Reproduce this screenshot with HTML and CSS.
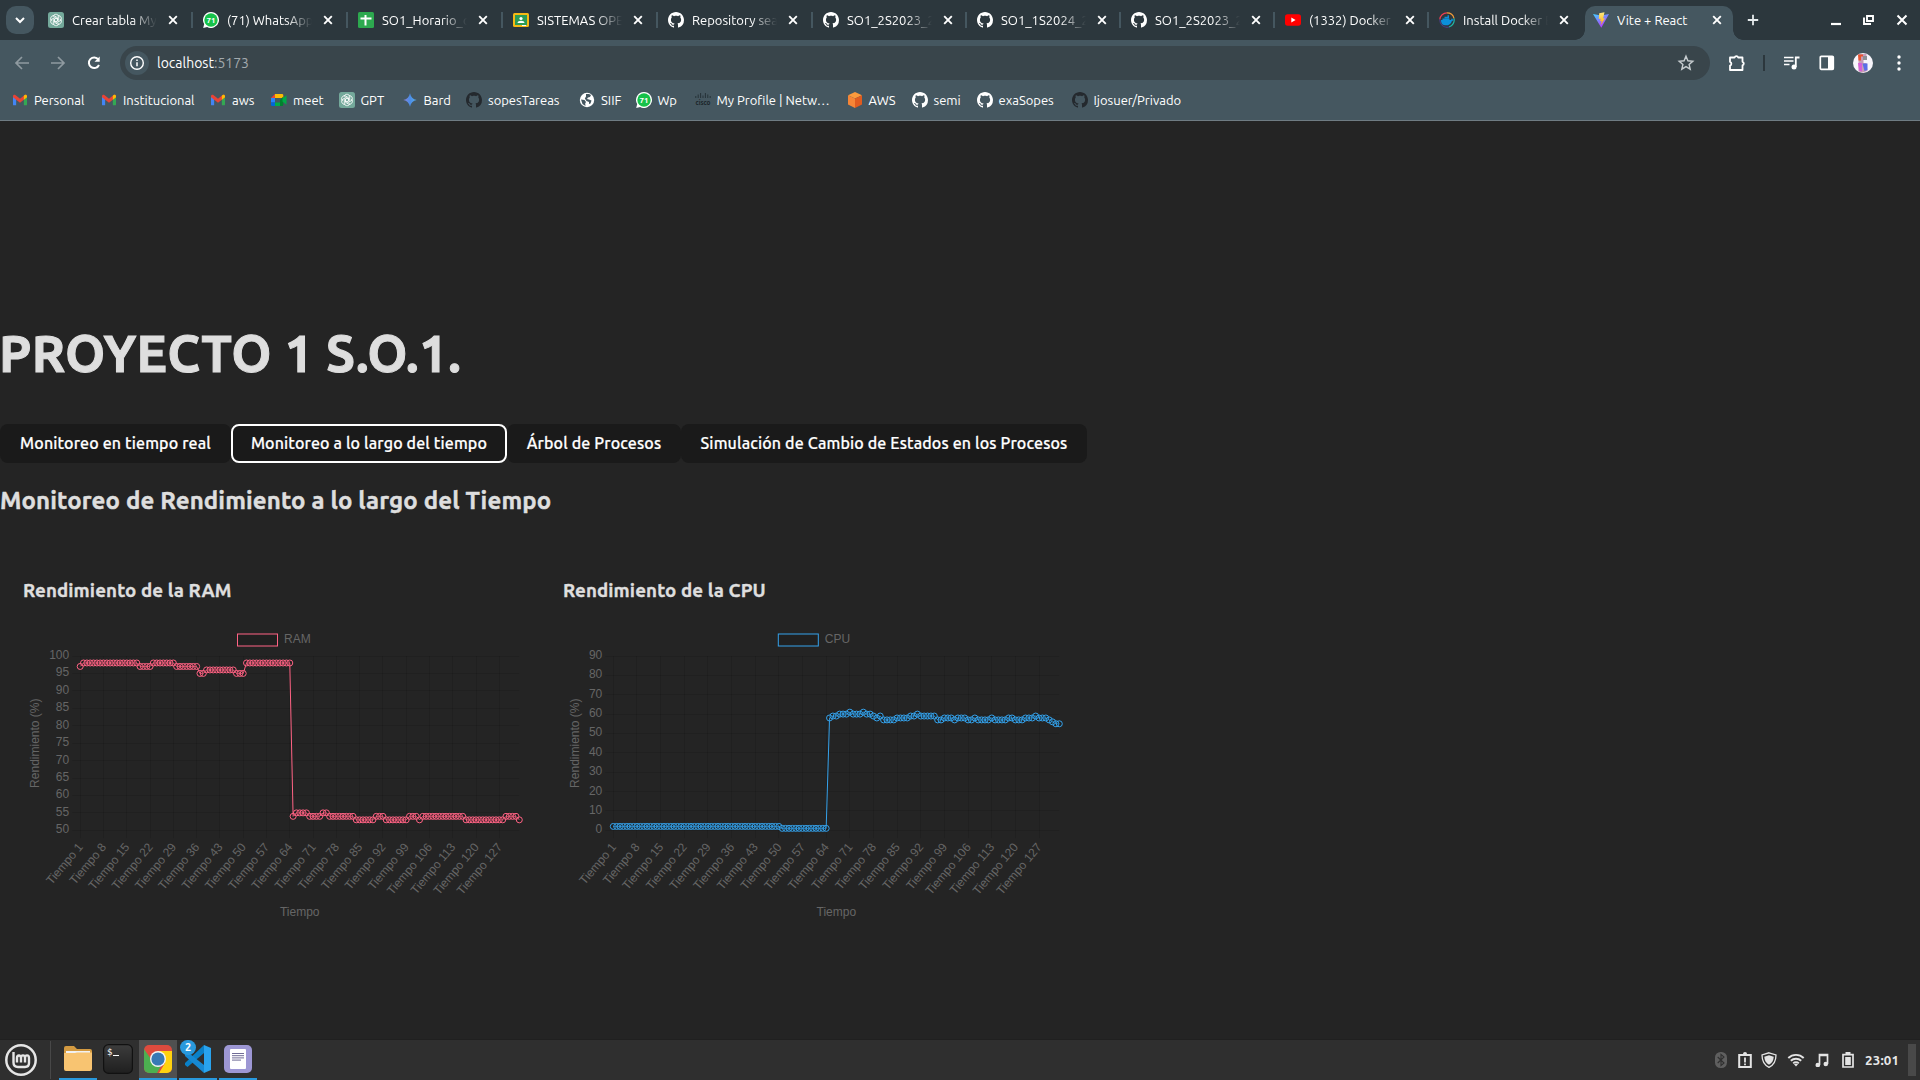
FILE: index.html
```html
<!DOCTYPE html>
<html lang="es">
<head>
<meta charset="utf-8">
<title>Vite + React</title>
<link rel="stylesheet" href="styles.css">
</head>
<body>
<svg class="defs" width="0" height="0" aria-hidden="true">
  <symbol id="github" viewBox="0 0 16 16"><path d="M8 0C3.58 0 0 3.58 0 8c0 3.54 2.29 6.53 5.47 7.59.4.07.55-.17.55-.38 0-.19-.01-.82-.01-1.49-2.01.37-2.53-.49-2.69-.94-.09-.23-.48-.94-.82-1.13-.28-.15-.68-.52-.01-.53.63-.01 1.08.58 1.23.82.72 1.21 1.87.87 2.33.66.07-.52.28-.87.51-1.07-1.78-.2-3.64-.89-3.64-3.95 0-.87.31-1.59.82-2.15-.08-.2-.36-1.02.08-2.12 0 0 .67-.21 2.2.82.64-.18 1.32-.27 2-.27s1.36.09 2 .27c1.53-1.04 2.2-.82 2.2-.82.44 1.1.16 1.92.08 2.12.51.56.82 1.27.82 2.15 0 3.07-1.87 3.75-3.65 3.95.29.25.54.73.54 1.48 0 1.07-.01 1.93-.01 2.2 0 .21.15.46.55.38A8.01 8.01 0 0 0 16 8c0-4.42-3.58-8-8-8z"/></symbol>
  <symbol id="gpt" viewBox="0 0 16 16"><rect width="16" height="16" rx="2.5" fill="#74a99b"/><g fill="none" stroke="#fff" stroke-width=".85"><path id="petal" d="M5.300 4.600c0-2.800 4.500-3.100 5.400-.4v4L8 9.700"/><use href="#petal" transform="rotate(60 8 8)"/><use href="#petal" transform="rotate(120 8 8)"/><use href="#petal" transform="rotate(180 8 8)"/><use href="#petal" transform="rotate(240 8 8)"/><use href="#petal" transform="rotate(300 8 8)"/></g></symbol>
  <symbol id="whatsapp" viewBox="0 0 16 16"><path d="M8 0a8 8 0 1 1-3.800 15.050L.2 16l1-3.900A8 8 0 0 1 8 0z" fill="#fff"/><circle cx="8" cy="8" r="6.700" fill="#16c24a"/><text x="8" y="11" text-anchor="middle" fill="#fff" font-size="8" font-weight="700">71</text></symbol>
  <symbol id="gmail" viewBox="0 0 16 12"><path d="M0 1.500V11a1 1 0 0 0 1 1h2.600V5z" fill="#4285f4"/><path d="M16 1.500V11a1 1 0 0 1-1 1h-2.600V5z" fill="#34a853"/><path d="M0 1.600C0 .2 1.600-.5 2.700.4L8 4.500 13.300.4C14.400-.5 16 .2 16 1.600V2.900L8 9 0 2.900z" fill="#ea4335"/><path d="M12.400 1v4.700L16 2.900V1.600C16 .2 14.400-.5 13.300.4z" fill="#fbbc04"/></symbol>
  <symbol id="close" viewBox="0 0 10 10"><path d="M1.200 1.200l7.600 7.600M8.800 1.200L1.200 8.800" stroke="currentColor" stroke-width="1.900"/></symbol>
</svg>

<header class="browser">
  <div class="tabstrip">
    <button class="tabsearch" aria-label="Buscar pestañas"><svg width="10" height="7" viewBox="0 0 10 7"><path d="M1 1l4 4 4-4" fill="none" stroke="#fff" stroke-width="2"/></svg></button>
    <div class="tabs">
      <div class="tab wide"><svg class="ico"><use href="#gpt"/></svg><span class="label">Crear tabla MySQL</span><svg class="x"><use href="#close"/></svg></div>
      <div class="tab wide"><svg class="ico"><use href="#whatsapp"/></svg><span class="label">(71) WhatsApp</span><svg class="x"><use href="#close"/></svg></div>
      <div class="tab wide"><svg class="ico" viewBox="0 0 16 16"><rect width="16" height="16" rx="1.500" fill="#2da94f"/><path d="M7.500 3v10.500M2.500 6.500h11" stroke="#fff" stroke-width="2"/></svg><span class="label">SO1_Horario_clases</span><svg class="x"><use href="#close"/></svg></div>
      <div class="tab wide"><svg class="ico" viewBox="0 0 16 16"><rect y="1" width="16" height="14" rx="1.500" fill="#f6b914"/><rect x="2" y="3" width="12" height="10" fill="#2c9b55"/><circle cx="8" cy="6.500" r="1.600" fill="#fff"/><path d="M4.500 11c0-3 7-3 7 0z" fill="#fff"/><path d="M9 13h4v1H9z" fill="#fff"/></svg><span class="label">SISTEMAS OPERATIVOS</span><svg class="x"><use href="#close"/></svg></div>
      <div class="tab wide"><svg class="ico white"><use href="#github"/></svg><span class="label">Repository search</span><svg class="x"><use href="#close"/></svg></div>
      <div class="tab"><svg class="ico white"><use href="#github"/></svg><span class="label">SO1_2S2023_201</span><svg class="x"><use href="#close"/></svg></div>
      <div class="tab"><svg class="ico white"><use href="#github"/></svg><span class="label">SO1_1S2024_201</span><svg class="x"><use href="#close"/></svg></div>
      <div class="tab"><svg class="ico white"><use href="#github"/></svg><span class="label">SO1_2S2023_201</span><svg class="x"><use href="#close"/></svg></div>
      <div class="tab"><svg class="ico" viewBox="0 0 16 16"><rect y="2.300" width="16" height="11.400" rx="2.600" fill="#f00"/><path d="M6.300 5.500v5L10.600 8z" fill="#fff"/></svg><span class="label">(1332) Docker Tutorial</span><svg class="x"><use href="#close"/></svg></div>
      <div class="tab last"><svg class="ico" viewBox="0 0 16 16"><g fill="none" stroke-width="1.200"><path d="M.8 7.500A7.200 7.200 0 0 1 8 .8" stroke="#ef3e50"/><path d="M8 .8a7.200 7.200 0 0 1 7 5.500" stroke="#f49c38"/><path d="M15 6.300A7.300 7.300 0 0 1 10 15" stroke="#20b9a8"/><path d="M10 15A7.300 7.300 0 0 1 .8 7.500" stroke="#493c82"/></g><path d="M2 8h10c.3-1 .6-1.600 1.200-1.600l.5 1 1 .3c-.3.900-1 1.100-1.800 1.200C12 12 10 13.300 7 13.300 4 13.300 2 12 2 8z" fill="#0b8fda"/><path d="M3.500 7.300h7M5.500 5.500h4.500M8.500 3.900H10" stroke="#0b8fda" stroke-width="1.500"/></svg><span class="label">Install Docker Engine</span><svg class="x"><use href="#close"/></svg></div>
      <div class="tab active"><svg class="ico" viewBox="0 0 16 16"><defs><linearGradient id="vp" x1="0" y1="0" x2=".6" y2="1"><stop stop-color="#41d1ff"/><stop offset="1" stop-color="#bd34fe"/></linearGradient><linearGradient id="vy" x1="0" y1="0" x2="0" y2="1"><stop stop-color="#ffea83"/><stop offset="1" stop-color="#ffa800"/></linearGradient></defs><path d="M0 2l8 1.500L16 2 8.300 15.700z" fill="url(#vp)"/><path d="M11.500.2L6.200 1.200 5.800 7l1.900-.3-.6 2.600 1.600-.4-1 4.300L12 6.200l-1.900.3z" fill="url(#vy)"/></svg><span class="label">Vite + React</span><svg class="x"><use href="#close"/></svg></div>
    </div>
    <svg class="newtab" width="12" height="12" viewBox="0 0 12 12"><path d="M6 .8v10.400M.8 6h10.400" stroke="#e6ebed" stroke-width="1.800"/></svg>
    <div class="wincontrols">
      <svg width="12" height="12" viewBox="0 0 12 12"><path d="M1 10h10" stroke="#fff" stroke-width="2.200"/></svg>
      <svg width="12" height="12" viewBox="0 0 12 12"><path d="M4 2h6v5H4zM1 3.500V10h7" fill="none" stroke="#fff" stroke-width="1.900"/></svg>
      <svg width="12" height="12" viewBox="0 0 12 12"><path d="M1.500 1.500l9 9M10.500 1.500l-9 9" stroke="#fff" stroke-width="2"/></svg>
    </div>
  </div>

  <div class="toolbar">
    <div class="nav">
      <svg class="dim" viewBox="0 0 16 16"><path d="M15 8H2.500M8 2L2 8l6 6"/></svg>
      <svg class="dim" viewBox="0 0 16 16"><path d="M1 8h12.500M8 2l6 6-6 6"/></svg>
      <svg viewBox="0 0 16 16"><path d="M13 10a5.300 5.300 0 1 1-.6-5.500"/><path d="M13.700 1.500v5.200H8.500z" fill="#fff" stroke="none"/></svg>
    </div>
    <div class="omnibox">
      <span class="info"><svg width="16" height="16" viewBox="0 0 16 16"><circle cx="8" cy="8" r="6.300" fill="none" stroke="#fff" stroke-width="1.400"/><path d="M8 7.200v4M8 4.500v1.500" stroke="#fff" stroke-width="1.500"/></svg></span>
      <span class="url">localhost<span class="port">:5173</span></span>
      <svg class="star" width="18" height="18" viewBox="0 0 18 18"><path d="M9 2.200l1.900 4.600 4.900.4-3.700 3.200 1.100 4.800L9 12.600l-4.200 2.600 1.100-4.800-3.700-3.200 4.900-.4z" fill="none" stroke="#c7cdd0" stroke-width="1.400"/></svg>
    </div>
    <div class="actions">
      <svg width="18" height="18" viewBox="0 0 18 18"><path d="M2 3.500h4.600a1.900 1.900 0 0 1 3.600 0h4.300v4.300a1.900 1.900 0 0 1 0 3.600v4.600H2v-4.400a2 2 0 0 0 0-3.800z" fill="none" stroke="#fff" stroke-width="1.800" stroke-linejoin="round"/></svg>
      <i class="rule"></i>
      <svg width="18" height="16" viewBox="0 0 18 16"><path d="M1 2.500h9.500M1 6h9.500M1 9.500h5.500" stroke="#fff" stroke-width="1.700"/><path d="M12.800 12V2.500H16.500" fill="none" stroke="#fff" stroke-width="1.800"/><circle cx="11" cy="12" r="2.500" fill="#fff"/></svg>
      <svg width="16" height="16" viewBox="0 0 16 16"><rect x="1.300" y="1.300" width="13" height="13" rx="1" fill="none" stroke="#fff" stroke-width="1.700"/><path d="M9 1.500h5.500v13H9z" fill="#fff"/></svg>
      <svg width="20" height="20" viewBox="0 0 20 20"><circle cx="10" cy="10" r="10" fill="#f7f5fb"/><path d="M5.500 1h8v6h-3v3h3l1 8-5 1.500-4-1z" fill="#c99cb8"/><path d="M5 1.500h5v2H8v4H5.500z" fill="#e8532c"/><path d="M10 3h4v4h-4z" fill="#8c8f95"/><path d="M5 10h4v8.500l-3-1z" fill="#d65fd8"/><path d="M9.500 10.500h5V17l-3 1z" fill="#5b6ee8"/></svg>
      <svg class="more" width="4" height="18" viewBox="0 0 4 18"><g fill="#fff"><circle cx="2" cy="3" r="1.700"/><circle cx="2" cy="9" r="1.700"/><circle cx="2" cy="15" r="1.700"/></g></svg>
    </div>
  </div>

  <nav class="bookmarks">
    <a><svg class="ico"><use href="#gmail" x="1" y="1" width="14" height="14"/></svg>Personal</a>
    <a><svg class="ico"><use href="#gmail" x="1" y="1" width="14" height="14"/></svg>Institucional</a>
    <a><svg class="ico"><use href="#gmail" x="1" y="1" width="14" height="14"/></svg>aws</a>
    <a><svg class="ico" viewBox="0 0 16 16"><path d="M0 6l4-4v4z" fill="#ea4335"/><path d="M4 2h7a1.300 1.300 0 0 1 1.300 1.300V6H4z" fill="#fbbc04"/><path d="M0 6h4v4.500H0z" fill="#2684fc"/><path d="M0 10.500h4V14H1.300A1.300 1.300 0 0 1 0 12.700z" fill="#0066da"/><path d="M4 10.500h5V14H4z" fill="#00ac47"/><path d="M9 8l3.300-3.500v8.200A1.300 1.300 0 0 1 11 14H9z" fill="#00832d"/><path d="M11.500 6.500L15.500 3.200V12.800L11.500 9.500z" fill="#00ac47"/></svg>meet</a>
    <a><svg class="ico"><use href="#gpt"/></svg>GPT</a>
    <a><svg class="ico" viewBox="0 0 16 16"><defs><linearGradient id="bg" x1="0" x2="1"><stop stop-color="#8e83d8"/><stop offset=".5" stop-color="#4b8de8"/><stop offset="1" stop-color="#59aee8"/></linearGradient></defs><path d="M8 1.300C8.700 5 11 7.300 14.700 8 11 8.700 8.700 11 8 14.700 7.300 11 5 8.700 1.300 8 5 7.300 7.300 5 8 1.300z" fill="url(#bg)"/></svg>Bard</a>
    <a><svg class="ico dark"><use href="#github"/></svg>sopesTareas</a>
    <a><svg class="ico" viewBox="0 0 16 16"><circle cx="8" cy="8" r="7.200" fill="#fff"/><path d="M2 7.500l3.500.5 1.500 2-.8 1.500.3 2.500L3.500 12zM7 2h3l2 1-1 2-2 .5-1 1.500L10 7.500l2.500 1-1 3-1.500.5v-2L7.500 9 5.800 6.500 7 4.500z" fill="#455760"/></svg>SIIF</a>
    <a><svg class="ico"><use href="#whatsapp"/></svg>Wp</a>
    <a><svg class="ico" viewBox="0 0 16 16"><path d="M.8 4v2M3.200 2.500V6M5.600 1v5M8 3.500V6M10.400 1v5M12.800 2.500V6M15.200 4v2" stroke="#263238" stroke-width="1"/><text x="8" y="13" text-anchor="middle" textLength="15" lengthAdjust="spacingAndGlyphs" fill="#1b2529" font-size="8" font-weight="700">cisco</text></svg>My Profile | Netw…</a>
    <a><svg class="ico" viewBox="0 0 16 16"><path d="M8 0l7 3.200L8 6.500 1 3.200z" fill="#fb9a3c"/><path d="M1 3.200l7 3.300V16L1 12.500z" fill="#f68536"/><path d="M15 3.200L8 6.500V16l7-3.500z" fill="#e05b1f"/></svg>AWS</a>
    <a><svg class="ico white"><use href="#github"/></svg>semi</a>
    <a><svg class="ico white"><use href="#github"/></svg>exaSopes</a>
    <a><svg class="ico dark"><use href="#github"/></svg>Ijosuer/Privado</a>
  </nav>
</header>

<main class="page">
  <h1>PROYECTO 1 S.O.1.</h1>
  <div class="menu">
    <button>Monitoreo en tiempo real</button>
    <button class="focused">Monitoreo a lo largo del tiempo</button>
    <button>Árbol de Procesos</button>
    <button>Simulación de Cambio de Estados en los Procesos</button>
  </div>
  <h2>Monitoreo de Rendimiento a lo largo del Tiempo</h2>
  <div class="charts">
    <section><h3>Rendimiento de la RAM</h3><svg class="chart" id="ram" width="540" height="310"></svg></section>
    <section><h3>Rendimiento de la CPU</h3><svg class="chart" id="cpu" width="540" height="310"></svg></section>
  </div>
</main>

<footer class="taskbar">
  <svg class="mint" width="34" height="34" viewBox="0 0 34 34"><circle cx="17" cy="17" r="14.700" fill="none" stroke="#e6e6e6" stroke-width="2.500"/><path d="M9.500 9v10.500c0 3 1.500 4.500 4.500 4.500h7c2.500 0 4-1.500 4-4v-5c0-3.500-4-3.500-4 0v4.500M21 15c0-3.500-4-3.500-4 0v4.500M17 15c0-3.500-4-3-4 0v4.500" fill="none" stroke="#e6e6e6" stroke-width="2.400"/></svg>
  <i class="split"></i>
  <div class="apps">
    <div class="app open"><svg width="28" height="26" viewBox="0 0 28 26"><path d="M0 2a2 2 0 0 1 2-2h8l3 3h13a2 2 0 0 1 2 2v6H0z" fill="#d39a41"/><path d="M2 5h24v4H2z" fill="#f1f1f1"/><path d="M0 7l11 0 2-.5h15V23a2 2 0 0 1-2 2H2a2 2 0 0 1-2-2z" fill="#f8c471"/></svg></div>
    <div class="app"><svg width="30" height="30" viewBox="0 0 30 30"><defs><linearGradient id="tg" x1="0" y1="0" x2="0" y2="1"><stop stop-color="#3c3c3c"/><stop offset="1" stop-color="#1f1f1f"/></linearGradient></defs><rect x=".6" y=".6" width="28.800" height="28.800" rx="5" fill="url(#tg)" stroke="#111" stroke-width="1.200"/><text x="4" y="11" fill="#fff" font-size="9" class="mono">$</text><path d="M10 11.500h6" stroke="#fff" stroke-width="1"/></svg></div>
    <div class="app open current"><svg width="28" height="28" viewBox="0 0 28 28"><defs><clipPath id="cc"><rect width="28" height="28" rx="5"/></clipPath></defs><g clip-path="url(#cc)"><path d="M0 0h28v28H0z" fill="#dd4b3e"/><path d="M0 4l9 13 8 4-4 7H0z" fill="#4caf50"/><path d="M14 6h14v22H15l6-10z" fill="#ffd20f"/></g><circle cx="14" cy="14" r="8" fill="#f3f3f3"/><circle cx="14" cy="14" r="6.600" fill="#3779b5"/></svg></div>
    <div class="app open vs"><svg width="28" height="28" viewBox="0 0 28 28"><path d="M20 0l7 3v22l-7 3z" fill="#29a3ee"/><path d="M20 0v8L3.500 22 1 20v-2z" fill="#0a80c8"/><path d="M1 9l2.500-2L20 20v8L1 11z" fill="#1689d4"/></svg><b class="badge">2</b></div>
    <div class="app open"><svg width="28" height="28" viewBox="0 0 28 28"><rect width="28" height="28" rx="5" fill="#9d97d4"/><rect x="6" y="4" width="16" height="20" rx="1" fill="#fff"/><path d="M8 8.500h12M8 10.700h12M8 12.900h12M8 15.100h9" stroke="#706c96" stroke-width="1"/></svg></div>
  </div>
  <div class="tray">
    <svg width="12" height="16" viewBox="0 0 12 16"><rect width="12" height="16" rx="5.500" fill="#5f5f5f"/><path d="M2.700 5l6.300 6-3 2.600V2.400L9 5l-6.300 6" fill="none" stroke="#2f2f2f" stroke-width="1.100"/></svg>
    <svg width="14" height="16" viewBox="0 0 14 16"><path d="M1.200 3h11.600v12H1.200z" fill="none" stroke="#e4e4e4" stroke-width="2"/><circle cx="7" cy="2" r="2" fill="#e4e4e4"/><path d="M7 5.500v5M7 11.500v1.800" stroke="#e4e4e4" stroke-width="1.800"/></svg>
    <svg width="16" height="16" viewBox="0 0 16 16"><path d="M8 .8l7 2.200c0 6-2 10-7 12.300C3 13 1 9 1 3z" fill="none" stroke="#e4e4e4" stroke-width="1.300"/><path d="M8 3.300l4.700 1.400c-.2 3.700-1.500 6.300-4.700 8-3.200-1.700-4.500-4.300-4.700-8z" fill="#e4e4e4"/></svg>
    <svg width="18" height="14" viewBox="0 0 18 14"><g fill="none" stroke="#e4e4e4" stroke-width="1.900"><path d="M1.300 5a11 11 0 0 1 15.400 0M3.800 7.800a7.500 7.500 0 0 1 10.400 0M6.200 10.400a4 4 0 0 1 5.600 0"/></g><path d="M9 13.500l-2-2.200a3 3 0 0 1 4 0z" fill="#e4e4e4"/></svg>
    <svg width="14" height="14" viewBox="0 0 14 14"><path d="M4.500 12V1.500h8V11M4.500 2.300h8" fill="none" stroke="#e4e4e4" stroke-width="1.700"/><circle cx="2.800" cy="12" r="2.300" fill="#e4e4e4"/><circle cx="10.800" cy="11" r="2.300" fill="#e4e4e4"/></svg>
    <svg width="12" height="16" viewBox="0 0 12 16"><path d="M1 2.700h10v12.300H1z" fill="none" stroke="#e4e4e4" stroke-width="1.700"/><path d="M3.500 0h5v2.500h-5zM3.200 5h5.600v8H3.200z" fill="#e4e4e4"/></svg>
    <time>23:01</time>
    <i class="desk"></i>
  </div>
</footer>
<script src="charts.js"></script>
</body>
</html>
```

FILE: styles.css
```css
* { box-sizing: border-box; }
body {
  margin: 0;
  width: 1920px;
  height: 1080px;
  overflow: hidden;
  display: flex;
  flex-direction: column;
  background: #242424;
  font-family: Ubuntu, "Noto Sans", sans-serif;
}
button { font: inherit; border: 0; padding: 0; }
svg { flex: none; display: block; }
.defs { position: absolute; }
.ico { width: 16px; height: 16px; }
.white { fill: #fff; }
.dark { fill: #24292e; }

/* Browser chrome */
.browser { height: 121px; background: #455760; border-bottom: 1px solid #6f7c83; color: #fff; font-size: 13px; }
.tabstrip { display: flex; height: 40px; background: #2c373d; align-items: center; padding-left: 6px; }
.tabsearch { width: 28px; height: 28px; border-radius: 10px; background: #455760; display: flex; align-items: center; justify-content: center; margin-right: 4px; }
.tabs { display: flex; height: 40px; }
.tab { width: 154px; display: flex; align-items: center; padding-left: 10px; position: relative; }
.tab.wide { width: 155px; }
.tab::after { content: ""; position: absolute; right: 0; top: 12px; width: 2px; height: 16px; background: #455760; }
.tab.last::after { display: none; }
.tab .label { width: 85px; margin-left: 8px; line-height: 22px; white-space: nowrap; overflow: hidden; -webkit-mask-image: linear-gradient(90deg, #000 70%, transparent 100%); mask-image: linear-gradient(90deg, #000 70%, transparent 100%); }
.tab .x { width: 10px; height: 10px; margin-left: 11px; }
.tab.active { width: 148px; height: 34px; margin: 6px 0 0 2px; padding: 0 0 6px 8px; background: #455760; border-radius: 10px 10px 0 0; }
.tab.active .label { -webkit-mask-image: none; mask-image: none; }
.tab.active .x { margin-left: 10px; }
.tab.active::before, .tab.active::after { content: ""; display: block; position: absolute; bottom: 0; top: auto; width: 10px; height: 10px; }
.tab.active::before { left: -10px; background: radial-gradient(circle at 0 0, #2c373d 9.500px, #455760 10px); }
.tab.active::after { right: -10px; background: radial-gradient(circle at 100% 0, #2c373d 9.500px, #455760 10px); }
.newtab { margin-left: 14px; }
.wincontrols { margin-left: auto; display: flex; gap: 21px; padding-right: 12px; }
.toolbar { display: flex; align-items: center; height: 46px; padding-left: 14px; }
.nav { display: flex; gap: 20px; width: 106px; }
.nav svg { width: 16px; height: 16px; fill: none; stroke: #fff; stroke-width: 2; }
.nav .dim { stroke: #8f9aa0; stroke-width: 1.700; }
.omnibox { width: 1590px; height: 34px; border-radius: 17px; background: #39454b; display: flex; align-items: center; padding: 0 15px 0 5px; }
.info { width: 24px; height: 24px; border-radius: 12px; background: #455760; display: flex; align-items: center; justify-content: center; }
.url { margin-left: 8px; font-size: 14px; flex: 1; }
.port { color: #a3aaae; }
.actions { display: flex; align-items: center; gap: 18px; padding-left: 18px; }
.rule { width: 2px; height: 16px; background: #2c373d; margin-left: -1px; }
.more { margin-left: 6px; }
.bookmarks { display: grid; grid-template-columns: 89px 109px 61px 67.500px 63px 64.500px 113px 56.500px 59px 152px 65px 65px 95px auto; height: 28px; align-items: center; padding-left: 12px; }
.bookmarks a { display: flex; gap: 6px; align-items: center; white-space: nowrap; }

/* Page */
.page { flex: 1; color: #dedede; }
h1 { margin: 197px 0 0 -1px; font-size: 51.200px; line-height: 70px; letter-spacing: .35px; -webkit-text-stroke: 1px #dedede; }
.menu { display: flex; margin-top: 36px; }
.menu button { height: 39px; padding-bottom: 2px; border-radius: 8px; background: #1a1a1a; color: #fff; font-size: 16px; font-weight: 500; white-space: nowrap; letter-spacing: .14px; -webkit-text-stroke: .2px #fff; width: 231px; }
.menu button:nth-child(2) { width: 276px; }
.menu button:nth-child(3) { width: 174px; }
.menu button:nth-child(4) { width: 406px; }
.menu .focused { outline: 2px solid #fff; outline-offset: -2px; }
h2 { margin: 20px 0 0; font-size: 24px; line-height: 36px; letter-spacing: .14px; -webkit-text-stroke: .45px #dedede; }
.charts { display: flex; margin-top: 58px; }
.charts section { width: 540px; }
h3 { margin: 0 0 0 23px; font-size: 18.720px; line-height: 28px; letter-spacing: .12px; -webkit-text-stroke: .35px #dedede; }
.chart { margin-top: 23px; font: 12px "Liberation Sans", Arial, sans-serif; }
.chart text { fill: #666; }
.grid { stroke: rgba(0, 0, 0, .1); stroke-width: 1; }
.series { fill: none; stroke-width: 1; }
.series circle { fill: rgba(0, 0, 0, .1); }

/* Desktop panel */
.taskbar { height: 41px; display: flex; align-items: center; background: #2f2f2f; border-top: 1px solid #202020; padding-left: 4px; }
.split { width: 1px; height: 38px; background: #484848; margin: 0 8px 0 12px; }
.apps { display: flex; gap: 2px; height: 40px; }
.app { width: 38px; height: 40px; display: flex; align-items: center; justify-content: center; position: relative; padding-bottom: 2px; }
.app.open { border-bottom: 2px solid #2999dd; padding: 0; }
.app.current { background: #505050; }
.badge { position: absolute; left: 1px; top: 0; width: 16px; height: 15px; border-radius: 8px; background: #2999dd; color: #fff; font-size: 11px; line-height: 14px; text-align: center; }
.mono { font-family: "DejaVu Sans Mono", monospace; }
.tray { margin-left: auto; display: flex; align-items: center; padding-right: 4px; }
.tray svg { margin-right: 11px; }
.tray svg:nth-child(2) { margin-right: 9px; }
.tray svg:nth-child(3), .tray svg:nth-child(4) { margin-right: 10px; }
.tray svg:nth-child(5) { margin-right: 13px; }
.tray time { color: #e8e8e8; font-size: 13.300px; font-weight: 700; letter-spacing: .2px; width: 43px; }
.desk { width: 8px; height: 32px; background: #494949; }
```

FILE: charts.js
```js
// Each run is [value, how many consecutive samples].
const ram = [[97,1],[98,17],[97,4],[98,7],[97,7],[95,2],[96,9],[95,3],[98,14],[54,1],[55,4],[54,4],[55,2],[54,8],[53,6],[54,3],[53,7],[54,3],[53,1],[54,13],[53,12],[54,4],[53,1]];
const cpu = [[2,50],[1,14],[58,1],[59,2],[60,3],[61,1],[60,3],[61,1],[60,2],[59,1],[58,1],[59,1],[57,4],[58,4],[59,2],[60,1],[59,5],[57,2],[58,3],[57,1],[58,3],[57,2],[58,1],[57,4],[58,1],[57,4],[58,2],[57,3],[58,3],[59,1],[58,3],[57,1],[56,1],[55,2]];

function draw(id, runs, o) {
  const data = runs.flatMap(([v, n]) => Array(n).fill(v));
  const top = 28, bottom = 202.300, right = 519.300;
  const step = (right - o.left) / (data.length - 1);
  const X = i => o.left + i * step;
  const Y = v => bottom - (v - o.min) / (o.max - o.min) * (bottom - top);
  const snap = v => Math.floor(v) + .5;
  let s = `<rect x="${o.legend}" y="6" width="40" height="12" fill="rgba(0,0,0,.1)" stroke="${o.color}"/>` +
    `<text x="${o.legend + 46.5}" y="15">${o.name}</text><g class="grid">`;
  for (let v = o.min; v <= o.max; v += o.tick) s += `<path d="M${o.left - 8} ${snap(Y(v))}H${right}"/>`;
  for (let i = 0; i < data.length; i += 7) s += `<path d="M${snap(X(i))} ${top}V${bottom + 8}"/>`;
  s += '</g>';
  for (let v = o.min; v <= o.max; v += o.tick) s += `<text x="${o.left - 11}" y="${Y(v) + 3}" text-anchor="end">${v}</text>`;
  for (let i = 0; i < 127; i += 7) s += `<text transform="translate(${X(i)} 213.300) rotate(-50)" x="-2.5" y="6.5" text-anchor="end">Tiempo ${i + 1}</text>`;
  s += `<text x="${(o.left + right) / 2}" y="287.500" text-anchor="middle">Tiempo</text>` +
    `<text transform="translate(39 115.200) rotate(-90)" text-anchor="middle">Rendimiento (%)</text>` +
    `<g class="series" stroke="${o.color}"><path d="M${data.map((v, i) => X(i) + ' ' + Y(v)).join('L')}"/>` +
    data.map((v, i) => `<circle cx="${X(i)}" cy="${Y(v)}" r="3"/>`).join('') + '</g>';
  document.getElementById(id).innerHTML = s;
}
draw('ram', ram, { name: 'RAM', color: 'rgb(255,99,132)', left: 80.200, min: 50, max: 100, tick: 5, legend: 237.500 });
draw('cpu', cpu, { name: 'CPU', color: 'rgb(53,162,235)', left: 73.300, min: 0, max: 90, tick: 10, legend: 238.300 });
```
